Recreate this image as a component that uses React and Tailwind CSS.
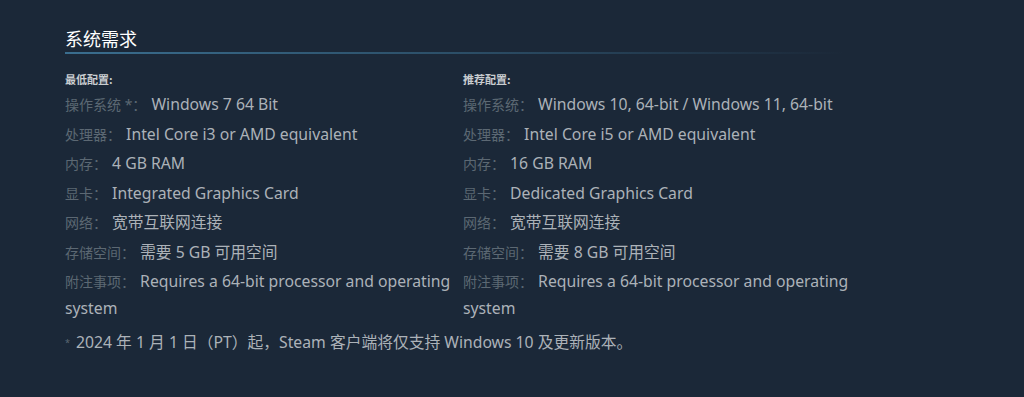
const FONT = { fontFamily: '"Noto Sans", "Noto Sans CJK SC", Arial, sans-serif' };
const HEAD_FONT = { fontFamily: '"Noto Sans CJK SC", "Noto Sans", sans-serif' };

const minReq = [
  ['操作系统 *：', 'Windows 7 64 Bit'],
  ['处理器：', 'Intel Core i3 or AMD equivalent'],
  ['内存：', '4 GB RAM'],
  ['显卡：', 'Integrated Graphics Card'],
  ['网络：', '宽带互联网连接'],
  ['存储空间：', '需要 5 GB 可用空间'],
  ['附注事项：', 'Requires a 64-bit processor and operating system'],
];

const recReq = [
  ['操作系统：', 'Windows 10, 64-bit / Windows 11, 64-bit'],
  ['处理器：', 'Intel Core i5 or AMD equivalent'],
  ['内存：', '16 GB RAM'],
  ['显卡：', 'Dedicated Graphics Card'],
  ['网络：', '宽带互联网连接'],
  ['存储空间：', '需要 8 GB 可用空间'],
  ['附注事项：', 'Requires a 64-bit processor and operating system'],
];

function ReqColumn({ title, rows }) {
  return (
    <div>
      <div className="text-[11px] leading-[16px] font-bold text-[#c9cdd0] mb-[4px]" style={HEAD_FONT}>{title}</div>
      <ul>
        {rows.map(([label, value]) => (
          <li key={label} className="text-[15.75px] leading-[27px] mb-[2.5px] text-[#acb2b8]">
            <span className="text-[14px] text-[#5c6873] mr-[1px]">{label}</span> {value}
          </li>
        ))}
      </ul>
    </div>
  );
}

export default function App() {
  return (
    <div className="w-full h-[397px] bg-[#1b2838] overflow-hidden" style={FONT}>
      <div className="pl-[65px] pt-[26px] w-[851px]">
        {/* Heading */}
        <h2 className="text-[18px] leading-[24px] text-white pb-[2px]" style={HEAD_FONT}>系统需求</h2>
        <div className="h-[2px] w-[780px] bg-gradient-to-r from-[#3a6e8f] via-[#2c4f68] to-transparent" />

        {/* Requirement columns */}
        <div className="grid grid-cols-[388px_388px] gap-x-[10px] mt-[17px]">
          <ReqColumn title="最低配置:" rows={minReq} />
          <ReqColumn title="推荐配置:" rows={recReq} />
        </div>

        {/* Footnote */}
        <div className="text-[15.75px] leading-[27px] text-[#acb2b8] mt-[4px]">
          <span className="text-[9px] align-top text-[#5c6873] mr-[6px]">*</span>
          2024 年 1 月 1 日（PT）起，Steam 客户端将仅支持 Windows 10 及更新版本。
        </div>
      </div>
    </div>
  );
}
